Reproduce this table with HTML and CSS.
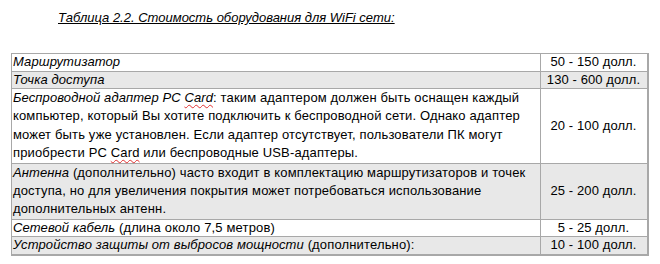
FILE: index.html
```html
<!DOCTYPE html>
<html lang="ru">
<head>
<meta charset="utf-8">
<link rel="stylesheet" href="styles.css">
</head>
<body>
<p class="caption">Таблица 2.2. Стоимость оборудования для WiFi сети:</p>
<table class="costs">
<tr class="odd single"><td class="desc"><i>Маршрутизатор</i></td><td class="price">50 - 150 долл.</td></tr>
<tr class="even single"><td class="desc"><i>Точка доступа</i></td><td class="price">130 - 600 долл.</td></tr>
<tr class="odd"><td class="desc"><i>Беспроводной адаптер PC <span class="spell">Card</span></i>: таким адаптером должен быть оснащен каждый компьютер, который Вы хотите подключить к беспроводной сети. Однако адаптер может быть уже установлен. Если адаптер отсутствует, пользователи ПК могут приобрести PC <span class="spell">Card</span> или беспроводные USB-адаптеры.</td><td class="price">20 - 100 долл.</td></tr>
<tr class="even"><td class="desc"><i>Антенна</i> (дополнительно) часто входит в комплектацию маршрутизаторов и точек доступа, но для увеличения покрытия может потребоваться использование дополнительных антенн.</td><td class="price">25 - 200 долл.</td></tr>
<tr class="odd single"><td class="desc"><i>Сетевой кабель</i> (длина около 7,5 метров)</td><td class="price">5 - 25 долл.</td></tr>
<tr class="even single"><td class="desc"><i>Устройство защиты от выбросов мощности</i> (дополнительно):</td><td class="price">10 - 100 долл.</td></tr>
</table>
</body>
</html>
```
FILE: styles.css
```css
html, body {
  margin: 0;
  padding: 0;
  background: #ffffff;
}
body {
  font-family: "Liberation Sans", Arial, sans-serif;
  font-size: 13px;
  color: #000;
}
.caption {
  margin: 10px 0 0 58px;
  font-style: italic;
  text-decoration: underline;
  line-height: 16px;
}
.costs {
  margin: 27px 0 0 11px;
  width: 638px;
  border-collapse: collapse;
  border-top: 1px solid #a8a8a8;
  border-left: 1px solid #a8a8a8;
  border-right: 2px solid #a8a8a8;
  border-bottom: 2px solid #a8a8a8;
}
.costs td {
  border: 1px solid #a8a8a8;
  padding: 0 2px 0 1px;
  line-height: 18.4px;
  letter-spacing: 0.15px;
  vertical-align: middle;
}
.costs .single td {
  line-height: 16.5px;
}
.costs td.desc {
  width: 525px;
}
.costs td.price {
  text-align: center;
  letter-spacing: 0.1px;
}
.costs i {
  letter-spacing: 0.1px;
}
.odd { background: #ffffff; }
.even { background: #e8e8e8; }
.spell {
  text-decoration: underline wavy #e03030;
  text-decoration-thickness: 1px;
  text-underline-offset: 2px;
}
```
